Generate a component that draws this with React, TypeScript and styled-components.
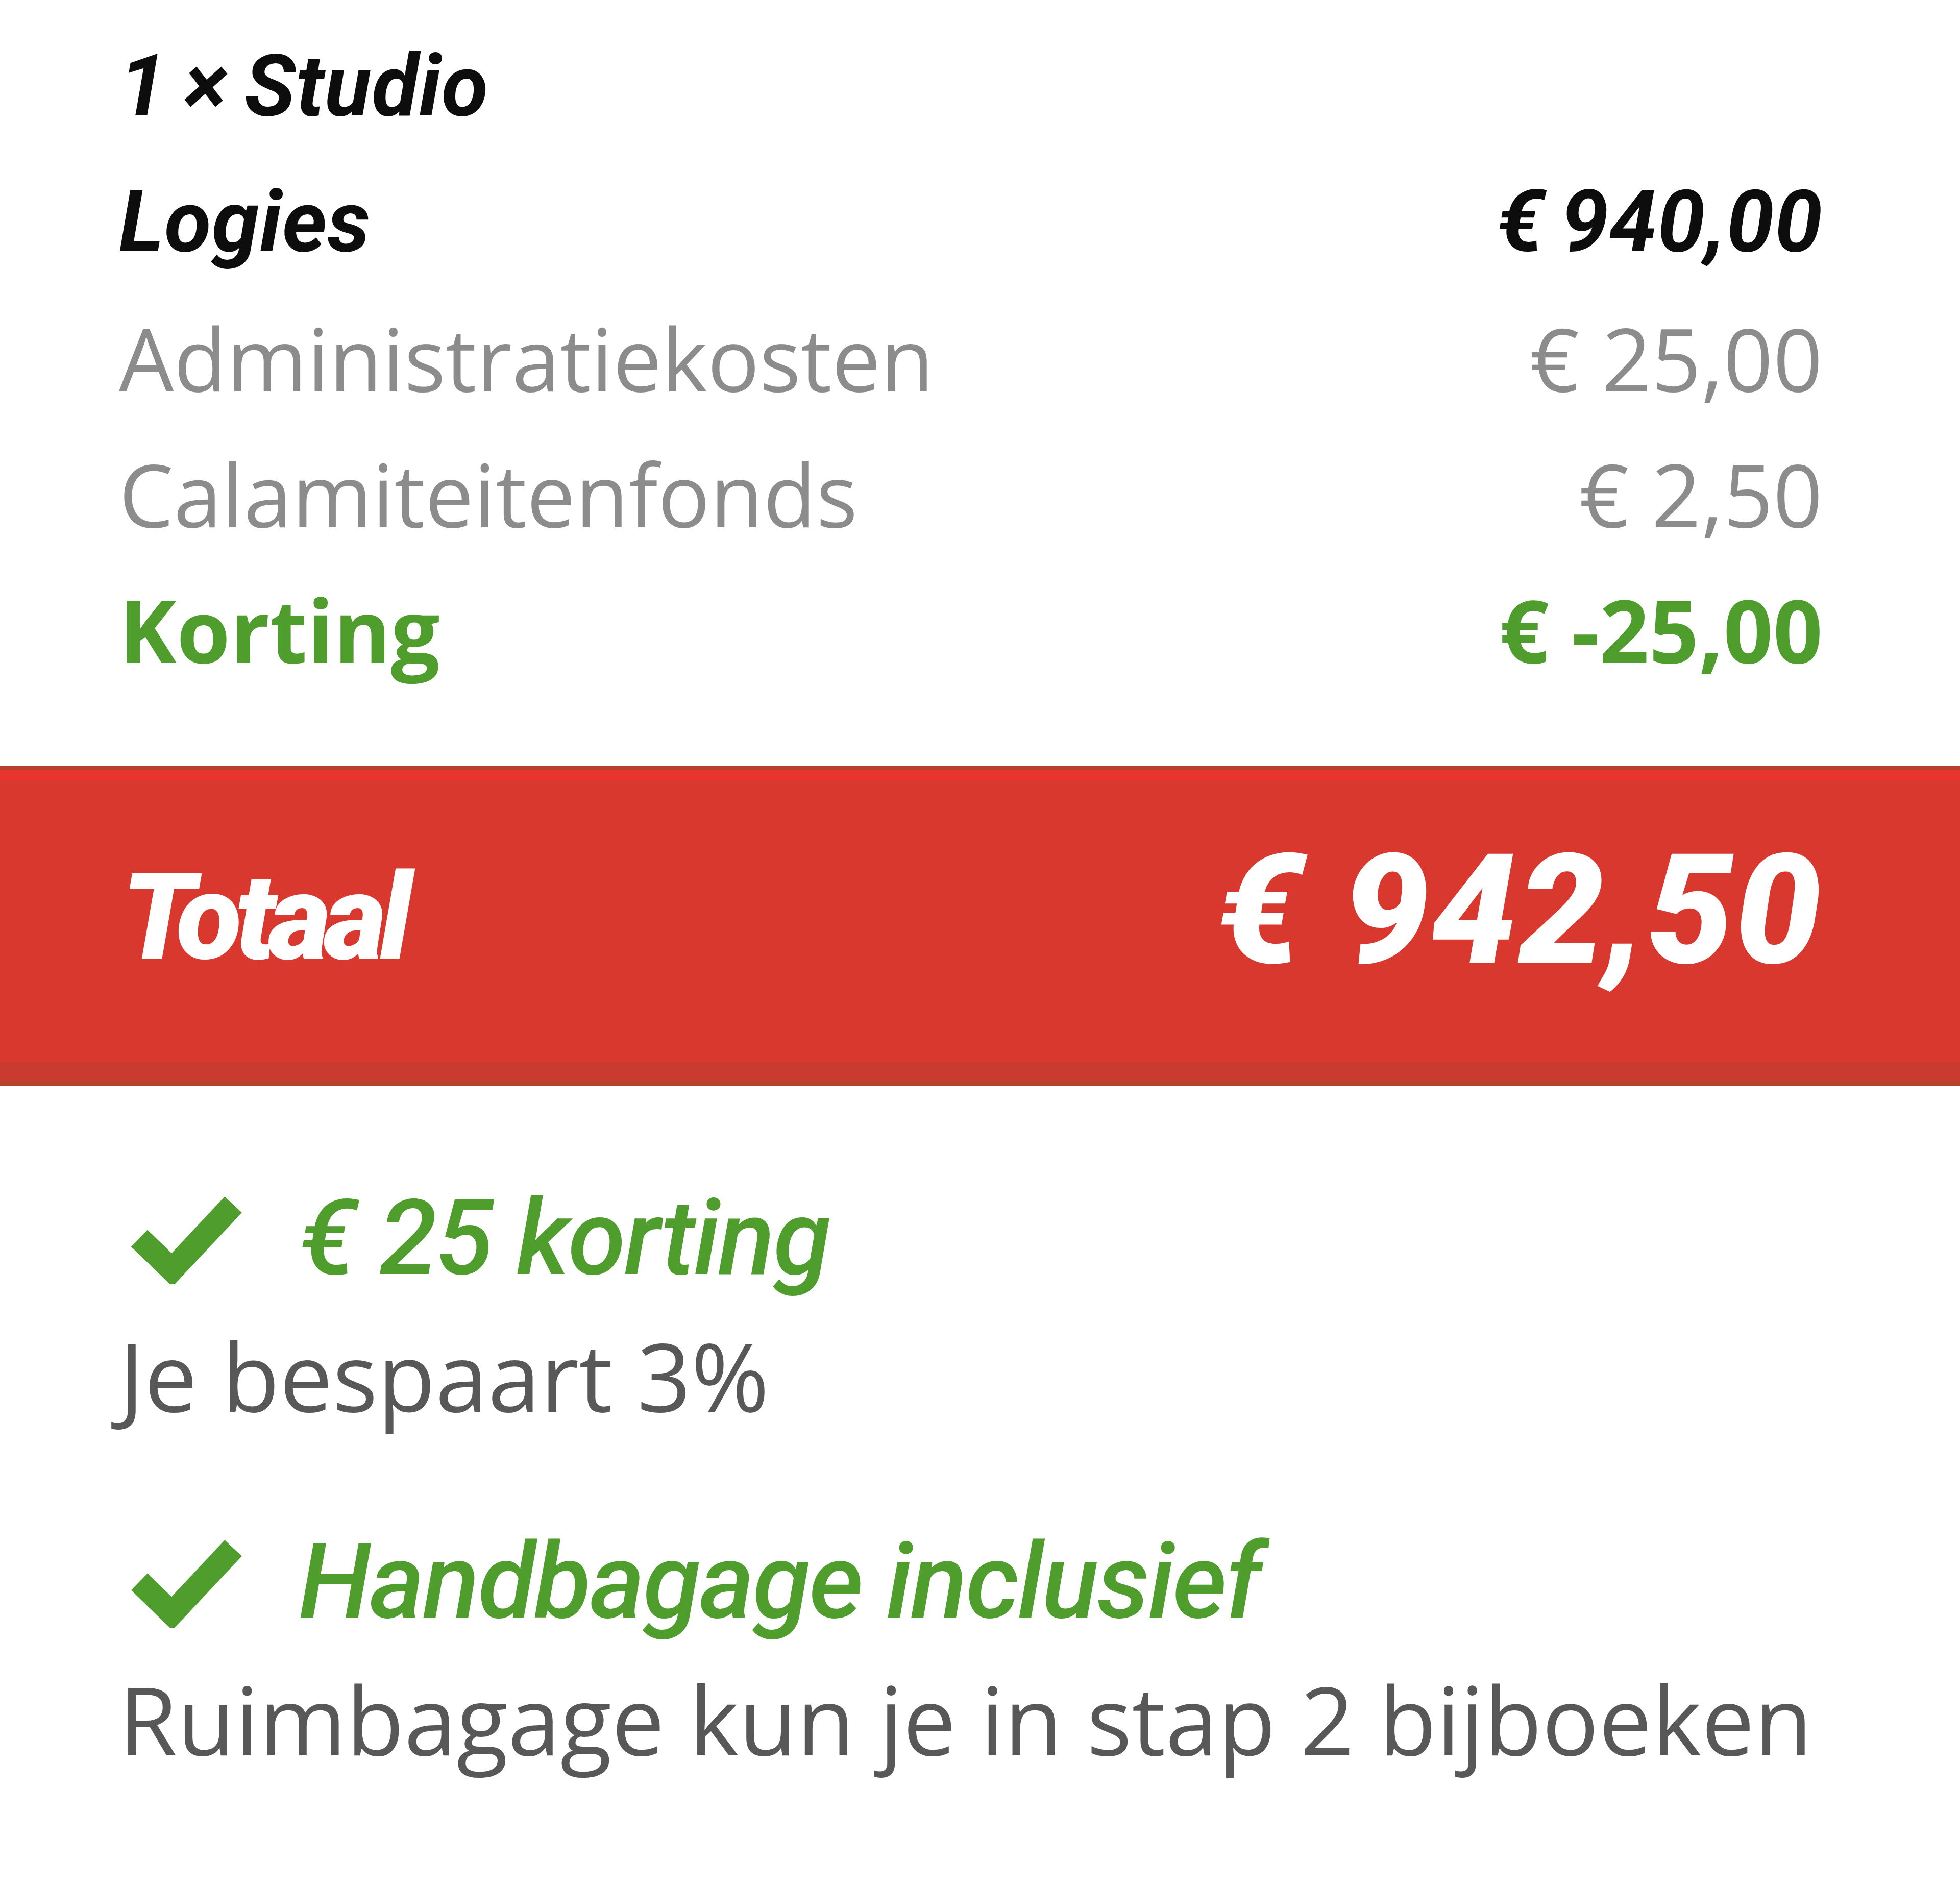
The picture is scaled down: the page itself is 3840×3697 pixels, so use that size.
import React from "react";
import styled, { createGlobalStyle } from "styled-components";

const GlobalStyle = createGlobalStyle`
  body {
    margin: 0;
    background: #ffffff;
  }
`;

const Page = styled.div`
  width: 3840px;
  background: #ffffff;
  padding-top: 36px;
  padding-bottom: 120px;
`;

const Lines = styled.section`
  padding: 0 269px 0 233px;
`;

const Row = styled.div`
  display: flex;
  justify-content: space-between;
  align-items: baseline;
  height: 266px;
  line-height: 266px;
`;

type Tone = "dark" | "muted" | "green";

const Label = styled.span<{ $tone: Tone }>`
  font-size: ${(p) => (p.$tone === "dark" ? "168px" : "170px")};
  font-family: ${(p) =>
    p.$tone === "dark" ? `Roboto, "Liberation Sans", sans-serif` : `"Open Sans", "Noto Sans", sans-serif`};
  font-style: ${(p) => (p.$tone === "dark" ? "italic" : "normal")};
  font-weight: ${(p) => (p.$tone === "muted" ? 400 : 700)};
  letter-spacing: ${(p) => (p.$tone === "dark" ? "0.005em" : "0")};
  word-spacing: ${(p) => (p.$tone === "dark" ? "-0.06em" : "0")};
  color: ${(p) => (p.$tone === "dark" ? "#0d0d0d" : p.$tone === "green" ? "#4e9d2d" : "#8c8c8c")};
`;

const TotalBar = styled.div`
  margin-top: 135px;
  height: 627px;
  box-sizing: border-box;
  padding: 0 269px 0 238px;
  display: flex;
  justify-content: space-between;
  align-items: center;
  background: linear-gradient(
    to bottom,
    #b8402f 0,
    #b8402f 8px,
    #e8342f 8px,
    #e8342f 28px,
    #d9382f 28px,
    #d9382f 580px,
    #c93a2f 580px,
    #c93a2f 615px,
    #b8402f 615px
  );
  color: #ffffff;
  font-family: Roboto, "Liberation Sans", sans-serif;
  font-style: italic;
`;

const TotalLabel = styled.span`
  font-size: 236px;
  font-weight: 900;
  letter-spacing: -0.055em;
  margin-bottom: 34px;
`;

const TotalAmount = styled.span`
  font-size: 300px;
  font-weight: 900;
  letter-spacing: 0.01em;
  margin-bottom: 62px;
`;

const Perks = styled.section`
  padding: 178px 120px 0 233px;
  display: flex;
  flex-direction: column;
  gap: 165px;
`;

const Perk = styled.div`
  display: flex;
  flex-direction: column;
`;

const PerkTitle = styled.div`
  display: flex;
  align-items: center;
  gap: 108px;
  padding-left: 22px;
  color: #4e9d2d;
  font-family: Roboto, "Liberation Sans", sans-serif;
  font-style: italic;
  font-weight: 500;
  font-size: 206px;
  letter-spacing: -0.015em;
  line-height: 240px;
  white-space: nowrap;
`;

const PerkText = styled.div`
  margin-top: 28px;
  color: #585858;
  font-family: "Open Sans", "Noto Sans", sans-serif;
  font-size: 185px;
  line-height: 240px;
  white-space: nowrap;
`;

const Check = () => (
  <svg width="222" height="180" viewBox="0 0 222 180">
    <path d="M18 90 L82 152 L202 24" fill="none" stroke="#4e9d2d" strokeWidth="46" strokeLinecap="butt" strokeLinejoin="miter" />
  </svg>
);

const rows: { label: string; amount: string; tone: Tone }[] = [
  { label: "1 × Studio", amount: "", tone: "dark" },
  { label: "Logies", amount: "€ 940,00", tone: "dark" },
  { label: "Administratiekosten", amount: "€ 25,00", tone: "muted" },
  { label: "Calamiteitenfonds", amount: "€ 2,50", tone: "muted" },
  { label: "Korting", amount: "€ -25,00", tone: "green" },
];

const perks = [
  { title: "€ 25 korting", text: "Je bespaart 3%" },
  { title: "Handbagage inclusief", text: "Ruimbagage kun je in stap 2 bijboeken" },
];

function App(): JSX.Element {
  return (
    <>
      <GlobalStyle />
      <Page>
        <Lines>
          {rows.map((r) => (
            <Row key={r.label}>
              <Label $tone={r.tone}>{r.label}</Label>
              <Label $tone={r.tone}>{r.amount}</Label>
            </Row>
          ))}
        </Lines>
        <TotalBar>
          <TotalLabel>Totaal</TotalLabel>
          <TotalAmount>€ 942,50</TotalAmount>
        </TotalBar>
        <Perks>
          {perks.map((p) => (
            <Perk key={p.title}>
              <PerkTitle>
                <Check />
                <span>{p.title}</span>
              </PerkTitle>
              <PerkText>{p.text}</PerkText>
            </Perk>
          ))}
        </Perks>
      </Page>
    </>
  );
}

export default App;
